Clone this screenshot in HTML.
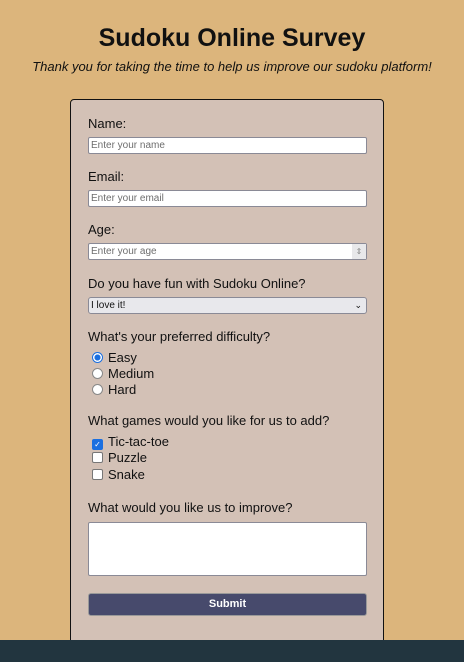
<!DOCTYPE html><html style="overflow:hidden"><head><style>
html,body{overflow:hidden;height:662px}
body{margin:0;width:464px;background:#dcb57c;font-family:"Liberation Sans",sans-serif;position:relative;color:#111}
.a{position:absolute}
h1{position:absolute;left:0;width:464px;top:22px;margin:0;text-align:center;font-size:25px;font-weight:bold;line-height:32px}
.sub{left:0;width:464px;top:59px;text-align:center;font-style:italic;font-size:13px}
.panel{left:70px;top:99px;width:312px;height:560px;background:#d3c1b6;border:1px solid #111;border-radius:4px}
.lbl{left:88px;font-size:13px;line-height:16px}
.inp{left:88px;width:275px;height:15px;background:#fff;border:1px solid #8a8a96;border-radius:2px;font-size:10px;color:#6d6d6d;line-height:15px;padding-left:2px;box-sizing:content-box}
.opt{left:92px;font-size:13px;line-height:16px}
.rad{display:inline-block;width:9px;height:9px;border:1px solid #888;border-radius:50%;background:#fff;vertical-align:-1px;margin-right:5px}
.chk{display:inline-block;width:9px;height:9px;border:1px solid #777;border-radius:2px;background:#fff;vertical-align:-1px;margin-right:5px}
.bottom{left:0;top:640px;width:464px;height:22px;background:#22353f}
</style></head><body>
<h1>Sudoku Online Survey</h1>
<div class="a sub">Thank you for taking the time to help us improve our sudoku platform!</div>
<div class="a panel"></div>
<div class="a lbl" style="top:116px">Name:</div>
<div class="a inp" style="top:137px">Enter your name</div>
<div class="a lbl" style="top:169px">Email:</div>
<div class="a inp" style="top:190px">Enter your email</div>
<div class="a lbl" style="top:222px">Age:</div>
<div class="a inp" style="top:243px">Enter your age<span class="a" style="right:0;top:0;width:14px;height:15px;background:#e8e8ea;font-size:8px;text-align:center;color:#888">⇕</span></div>
<div class="a lbl" style="top:276px">Do you have fun with Sudoku Online?</div>
<div class="a inp" style="top:297px;background:#e8e8ec;color:#111;border-radius:3px">I love it!<span class="a" style="right:4px;top:0;font-size:9px">⌄</span></div>
<div class="a lbl" style="top:329px">What's your preferred difficulty?</div>
<div class="a opt" style="top:350px"><span class="rad" style="border:1px solid #1a6fe0;background:radial-gradient(circle,#1a6fe0 45%,#fff 50%)"></span>Easy</div>
<div class="a opt" style="top:366px"><span class="rad"></span>Medium</div>
<div class="a opt" style="top:382px"><span class="rad"></span>Hard</div>
<div class="a lbl" style="top:413px">What games would you like for us to add?</div>
<div class="a opt" style="top:434px"><span class="chk" style="background:#1a6fe0;border-color:#1a6fe0;color:#fff;font-size:8px;line-height:9px;text-align:center">✓</span>Tic-tac-toe</div>
<div class="a opt" style="top:450px"><span class="chk"></span>Puzzle</div>
<div class="a opt" style="top:467px"><span class="chk"></span>Snake</div>
<div class="a lbl" style="top:500px">What would you like us to improve?</div>
<div class="a inp" style="top:522px;height:52px"></div>
<div class="a" style="left:88px;top:593px;width:277px;height:21px;background:#474a6c;border:1px solid #999;border-radius:3px;color:#fff;font-size:11px;font-weight:bold;text-align:center;line-height:21px">Submit</div>
<div class="a bottom"></div>
</body></html>
